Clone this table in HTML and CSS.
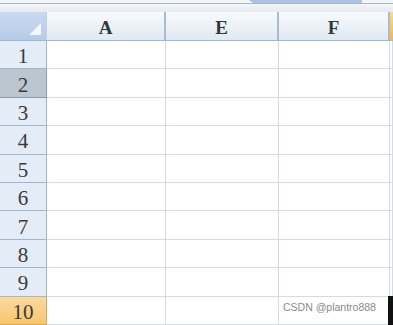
FILE: index.html
```html
<!DOCTYPE html>
<html>
<head>
<meta charset="utf-8">
<link rel="stylesheet" href="styles.css">
</head>
<body>
<div class="page">
  <div class="topbar">
    <div class="tab"></div>
  </div>
  <div class="sheet">
    <div class="corner"><span class="tri"></span></div>
    <div class="colhead">A</div>
    <div class="colhead">E</div>
    <div class="colhead">F</div>
    <div class="colhead sel"></div>

    <div class="rowhead">1</div><div class="cell"></div><div class="cell"></div><div class="cell"></div><div class="cell"></div>
    <div class="rowhead gray">2</div><div class="cell"></div><div class="cell"></div><div class="cell"></div><div class="cell"></div>
    <div class="rowhead">3</div><div class="cell"></div><div class="cell"></div><div class="cell"></div><div class="cell"></div>
    <div class="rowhead">4</div><div class="cell"></div><div class="cell"></div><div class="cell"></div><div class="cell"></div>
    <div class="rowhead">5</div><div class="cell"></div><div class="cell"></div><div class="cell"></div><div class="cell"></div>
    <div class="rowhead">6</div><div class="cell"></div><div class="cell"></div><div class="cell"></div><div class="cell"></div>
    <div class="rowhead">7</div><div class="cell"></div><div class="cell"></div><div class="cell"></div><div class="cell"></div>
    <div class="rowhead">8</div><div class="cell"></div><div class="cell"></div><div class="cell"></div><div class="cell"></div>
    <div class="rowhead">9</div><div class="cell"></div><div class="cell"></div><div class="cell"></div><div class="cell"></div>
    <div class="rowhead orange">10</div><div class="cell"></div><div class="cell"></div><div class="cell"></div><div class="cell"></div>
  </div>
  <div class="watermark">CSDN @plantro888</div>
  <div class="blackbar"></div>
</div>
</body>
</html>
```

FILE: styles.css
```css
html, body {
  margin: 0;
  padding: 0;
  background: #ffffff;
}
.page {
  position: relative;
  width: 393px;
  height: 325px;
  overflow: hidden;
}
.topbar {
  height: 12px;
  box-sizing: border-box;
  background: linear-gradient(#f4f5f7 0, #f4f5f7 3px, #aab7c6 3px, #aab7c6 4px, #f3f5f8 4px, #e6ebf1 12px);
  display: flex;
}
.tab {
  margin-left: 249px;
  width: 113px;
  height: 3px;
  background: #a8c3e6;
  clip-path: polygon(0 0, 100% 0, 100% 100%, 4px 100%);
}
.sheet {
  display: grid;
  grid-template-columns: 47px 119px 113px 111px 3px;
  grid-template-rows: 29px repeat(10, 28.4px);
  font-family: "Liberation Serif", "DejaVu Serif", serif;
  font-size: 21px;
  color: #3a3a3a;
}
.corner {
  position: relative;
  background: linear-gradient(#c9daf0, #b5cbe7);
  border-right: 1px solid #c3cfdd;
  border-bottom: 1px solid #9eb6ce;
  box-sizing: border-box;
}
.tri {
  position: absolute;
  right: 5px;
  bottom: 5px;
  width: 0;
  height: 0;
  border-left: 12px solid transparent;
  border-bottom: 12px solid #f3f6fa;
}
.colhead {
  display: flex;
  align-items: center;
  justify-content: center;
  padding-top: 3px;
  box-sizing: border-box;
  background: linear-gradient(#f8fafd, #e1e8f2);
  border-right: 2px solid #a9bcd2;
  border-bottom: 1px solid #9eb6ce;
  font-weight: bold;
  font-size: 19px;
  color: #2c3a3a;
}
.colhead.sel {
  border-right: none;
  background: linear-gradient(#f9d99f, #f1b656);
}
.rowhead {
  display: flex;
  align-items: center;
  justify-content: center;
  padding-top: 4px;
  box-sizing: border-box;
  background: #e4ecf7;
  border-right: 1px solid #9eb6ce;
  border-bottom: 1px solid #9eb6ce;
}
.rowhead.gray {
  background: #bcc6d1;
  border-right-color: #8a9bb0;
  border-bottom-color: #8a9bb0;
}
.rowhead.orange {
  background: linear-gradient(#fad99e, #f6c670);
  border-right-color: #e2a54b;
  border-bottom-color: #e2a54b;
}
.cell {
  box-sizing: border-box;
  border-right: 1px solid #d4dbe6;
  border-bottom: 1px solid #d4dbe6;
  background: #ffffff;
}
.watermark {
  position: absolute;
  left: 283px;
  top: 301px;
  font-family: "Liberation Sans", Arial, sans-serif;
  font-size: 10.5px;
  color: #8a8a8a;
}
.blackbar {
  position: absolute;
  left: 388px;
  top: 296px;
  width: 5px;
  height: 29px;
  background: #111111;
}
```
